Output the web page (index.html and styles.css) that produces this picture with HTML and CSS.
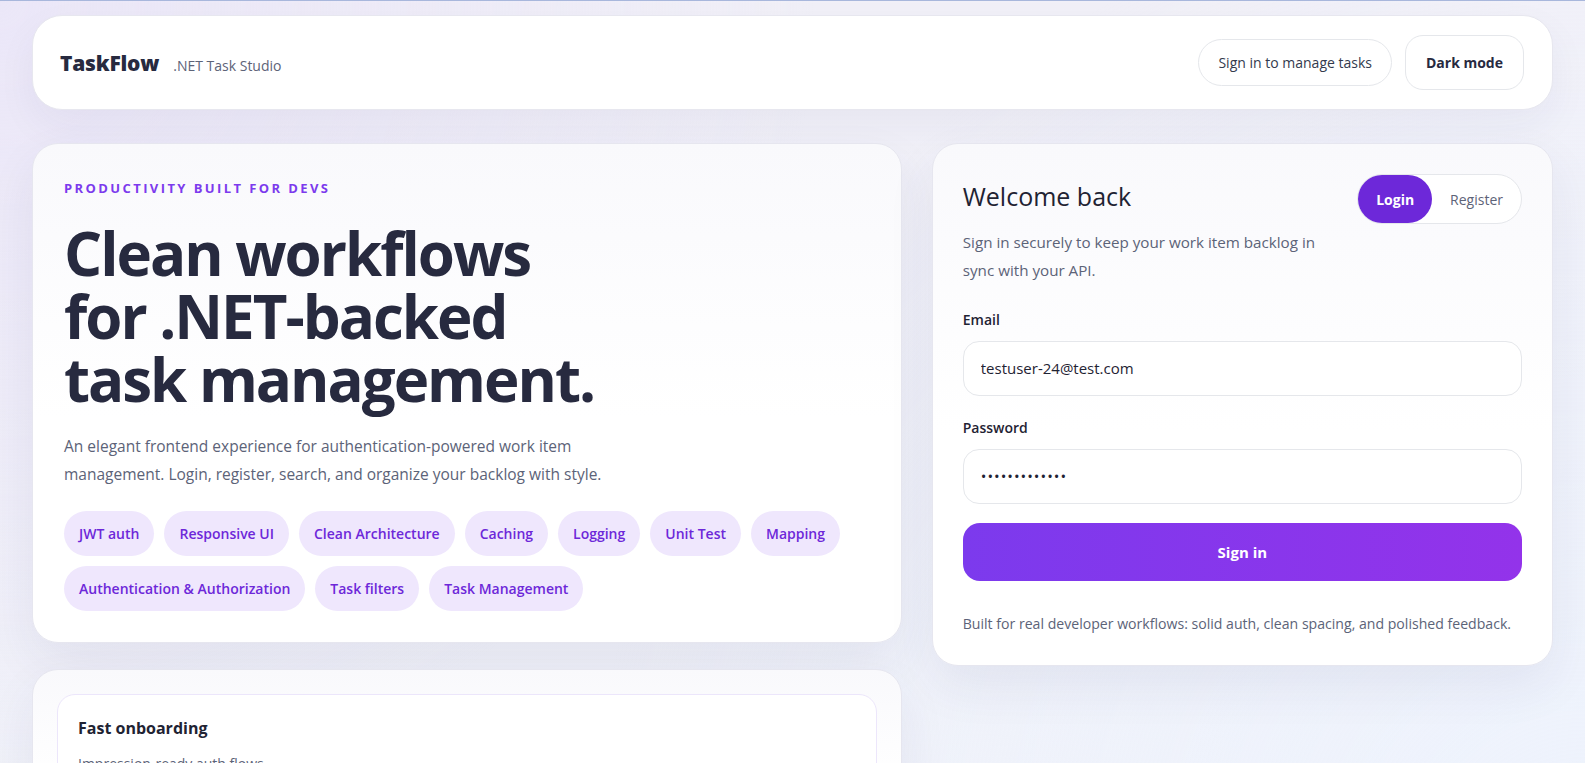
FILE: index.html
```html
<!DOCTYPE html>
<html lang="en">

<head>
    <meta charset="UTF-8">
    <meta name="viewport" content="width=device-width, initial-scale=1.0">
    <title>TaskFlow</title>
    <link rel="stylesheet" href="styles.css">
</head>

<body>
    <div class="shell">
        <header class="topbar">
            <div class="brand">
                <span class="brand-name">TaskFlow</span>
                <span class="brand-sub">.NET Task Studio</span>
            </div>
            <div class="topbar-actions">
                <button class="pill-btn">Sign in to manage tasks</button>
                <button class="theme-btn">Dark mode</button>
            </div>
        </header>

        <main class="layout">
            <div class="left-col">
                <section class="card hero">
                    <div class="eyebrow">Productivity built for devs</div>
                    <h1>Clean workflows for .NET-backed task management.</h1>
                    <p class="lead">An elegant frontend experience for authentication-powered work item management. Login, register, search, and organize your backlog with style.</p>
                    <div class="chips">
                        <span class="chip">JWT auth</span>
                        <span class="chip">Responsive UI</span>
                        <span class="chip">Clean Architecture</span>
                        <span class="chip">Caching</span>
                        <span class="chip">Logging</span>
                        <span class="chip">Unit Test</span>
                        <span class="chip">Mapping</span>
                        <span class="chip">Authentication &amp; Authorization</span>
                        <span class="chip">Task filters</span>
                        <span class="chip">Task Management</span>
                    </div>
                </section>

                <section class="card features">
                    <div class="feature">
                        <h3>Fast onboarding</h3>
                        <p>Impression-ready auth flows.</p>
                    </div>
                </section>
            </div>

            <section class="card auth">
                <div class="auth-head">
                    <div class="auth-intro">
                        <h2>Welcome back</h2>
                        <p>Sign in securely to keep your work item backlog in sync with your API.</p>
                    </div>
                    <div class="switcher">
                        <button class="switch active">Login</button>
                        <button class="switch">Register</button>
                    </div>
                </div>

                <form class="auth-form">
                    <label for="email">Email</label>
                    <input id="email" class="field field-email" type="email" value="testuser-24@test.com">
                    <label for="password">Password</label>
                    <input id="password" class="field field-pass" type="password" value="Password123!!">
                    <button type="button" class="submit">Sign in</button>
                </form>

                <p class="auth-note">Built for real developer workflows: solid auth, clean spacing, and polished feedback.</p>
            </section>
        </main>
    </div>
</body>

</html>
```

FILE: styles.css
```css
* {
    box-sizing: border-box;
}

html,
body {
    margin: 0;
    padding: 0;
}

html {
    border-top: 1px solid #a8b7dc;
}

body {
    min-height: 100vh;
    overflow: hidden;
    font-family: "Open Sans", "Noto Sans", Arial, sans-serif;
    color: #272a3f;
    background:
        radial-gradient(circle at 0% 0%, #ebe7f8 0, rgba(235, 231, 248, 0) 45%),
        radial-gradient(circle at 100% 100%, #eef3fd 0, rgba(238, 243, 253, 0) 55%),
        linear-gradient(180deg, #f1f0f8 0%, #f0f2f9 100%);
}

button,
input {
    font-family: inherit;
}

.shell {
    margin: 0 32px;
    padding-top: 14px;
}

/* top bar */
.topbar {
    display: flex;
    align-items: center;
    justify-content: space-between;
    height: 95px;
    padding: 0 28px 0 27px;
    background: #fff;
    border: 1px solid #e7e7ef;
    border-radius: 30px;
    box-shadow: 0 16px 40px rgba(40, 44, 90, 0.05);
}

.brand {
    display: flex;
    align-items: baseline;
    gap: 14px;
}

.brand-name {
    font-size: 21px;
    font-weight: 800;
    letter-spacing: -0.2px;
    color: #272a3f;
}

.brand-sub {
    font-size: 14px;
    color: #5d6378;
}

.topbar-actions {
    display: flex;
    align-items: center;
    gap: 13px;
}

.pill-btn {
    height: 47px;
    padding: 0 19px;
    font-size: 14px;
    color: #333a4d;
    background: #fff;
    border: 1px solid #e5e7eb;
    border-radius: 999px;
}

.theme-btn {
    height: 55px;
    padding: 0 20px;
    font-size: 14px;
    font-weight: 700;
    color: #272a3f;
    background: #fff;
    border: 1px solid #e5e7eb;
    border-radius: 18px;
}

/* main grid */
.layout {
    display: grid;
    grid-template-columns: 1.4fr 1fr;
    gap: 30px;
    margin-top: 33px;
    align-items: start;
}

.left-col {
    display: flex;
    flex-direction: column;
    gap: 26px;
}

.card {
    background: linear-gradient(180deg, #f9f9fc 0%, #ffffff 55%);
    border: 1px solid #e6e6ef;
    border-radius: 26px;
    box-shadow: 0 20px 50px rgba(40, 48, 100, 0.07);
}

.hero {
    padding: 35px 31px 31px;
}

.eyebrow {
    font-size: 13px;
    line-height: 18px;
    font-weight: 700;
    letter-spacing: 2.4px;
    text-transform: uppercase;
    color: #7c3aed;
}

.hero h1 {
    margin: 25px 0 21px;
    max-width: 560px;
    font-size: 60px;
    line-height: 63px;
    font-weight: 700;
    letter-spacing: -2px;
    color: #272a3f;
}

.lead {
    margin: 0 0 22px;
    max-width: 560px;
    font-size: 15.5px;
    line-height: 28.4px;
    color: #5c6378;
}

.chips {
    display: flex;
    flex-wrap: wrap;
    gap: 10px;
}

.chip {
    display: inline-flex;
    align-items: center;
    height: 45px;
    padding: 0 15px;
    font-size: 14px;
    font-weight: 600;
    color: #6d28d9;
    background: #efe7fd;
    border-radius: 999px;
}

.features {
    padding: 24px 24px 40px;
}

.feature {
    padding: 22px 20px 60px;
    border: 1px solid #ece6fb;
    border-radius: 18px;
    background: #fff;
}

.feature h3 {
    margin: 0 0 15px;
    font-size: 16px;
    line-height: 22px;
    font-weight: 700;
    color: #1f2333;
}

.feature p {
    margin: 0;
    font-size: 14px;
    line-height: 20px;
    color: #5c6378;
}

/* auth card */
.auth {
    padding: 30px 30px 31px;
}

.auth-head {
    display: flex;
    justify-content: space-between;
    align-items: flex-start;
    gap: 16px;
}

.auth-intro h2 {
    margin: 6px 0 16px;
    font-size: 25px;
    line-height: 32px;
    font-weight: 400;
    color: #1f2333;
}

.auth-intro p {
    margin: 0;
    font-size: 15.2px;
    line-height: 28.4px;
    color: #5c6378;
}

.switcher {
    display: flex;
    flex-shrink: 0;
    border: 1px solid #e5e7eb;
    border-radius: 999px;
    background: #fff;
}

.switch {
    height: 48px;
    padding: 0 18px;
    font-size: 14px;
    color: #5d6378;
    background: none;
    border: 0;
    border-radius: 999px;
}

.switch.active {
    color: #fff;
    font-weight: 700;
    background: #6d28d9;
}

.auth-form {
    display: flex;
    flex-direction: column;
    margin-top: 25px;
}

.auth-form label {
    font-size: 14px;
    line-height: 20px;
    font-weight: 600;
    color: #1f2333;
    margin-bottom: 11px;
}

.field {
    height: 55px;
    padding: 0 17px;
    font-size: 15px;
    color: #1f2333;
    background: #fff;
    border: 1px solid #e5e7eb;
    border-radius: 16px;
    outline: none;
}

.field-email {
    margin-bottom: 22px;
}

.field-pass {
    letter-spacing: 1px;
    margin-bottom: 19px;
}

.submit {
    height: 58px;
    font-size: 15px;
    font-weight: 700;
    color: #fff;
    background: linear-gradient(90deg, #7c3aed 0%, #9333ea 100%);
    border: 0;
    border-radius: 17px;
}

.auth-note {
    margin: 33px 0 0;
    font-size: 14.1px;
    line-height: 20px;
    color: #5c6378;
    white-space: nowrap;
}
```
